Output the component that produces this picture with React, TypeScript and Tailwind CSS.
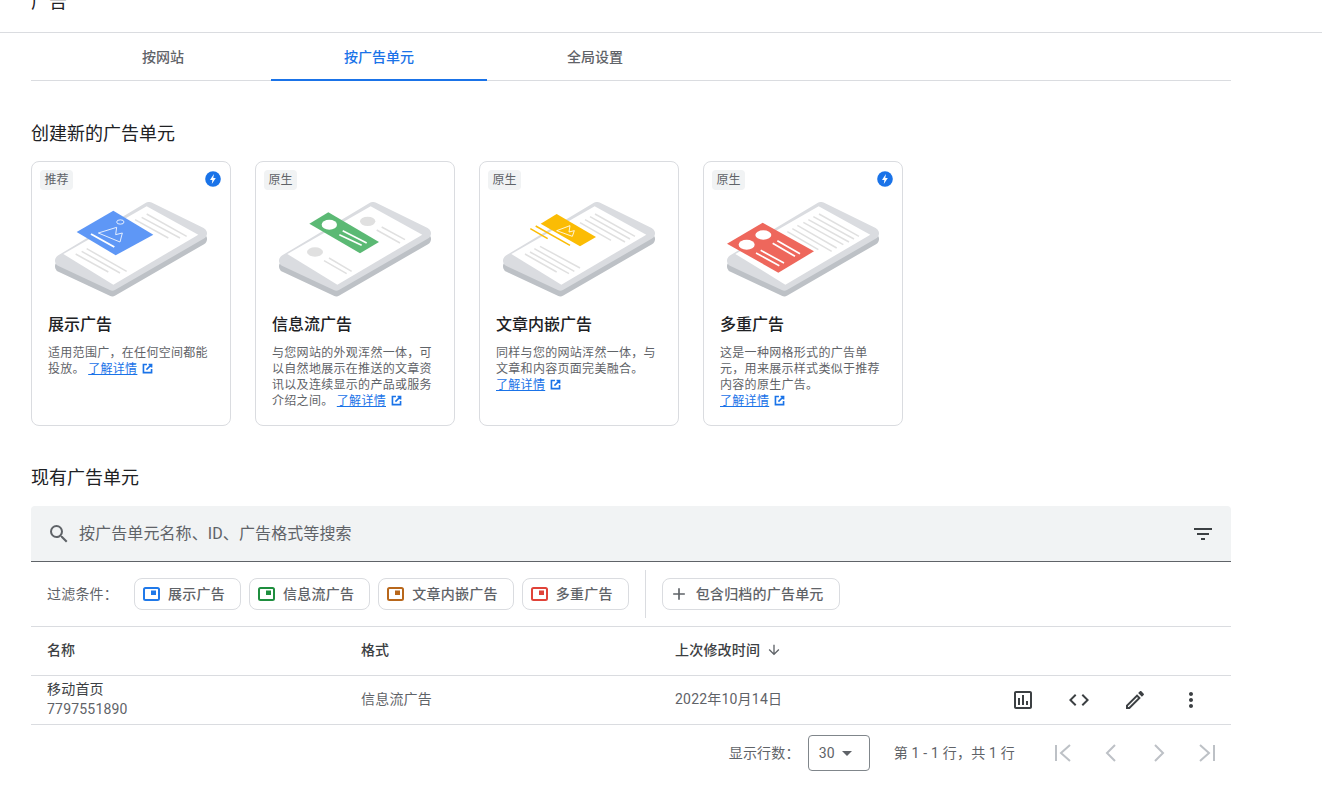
import type { ReactNode } from 'react';

const BLUE = '#1a73e8';

function Icon({ d, className }: { d: string; className?: string }) {
  return (
    <svg viewBox="0 0 24 24" className={className} fill="currentColor">
      <path d={d} />
    </svg>
  );
}

function Bolt() {
  return (
    <svg viewBox="0 0 16 16" className="h-4 w-4">
      <circle cx="8" cy="8" r="7.8" fill={BLUE} />
      <path d="M8.9 2.9 5 8.9h2.4l-.6 4.2 4-6.2H8.3z" fill="#fff" />
    </svg>
  );
}

function Lines({ items }: { items: number[][] }) {
  return (
    <g stroke="#e0e0e0" strokeWidth="4.5">
      {items.map((l) => (
        <line key={l.join('-')} x1={l[0]} y1={l[1]} x2={l[2]} y2={l[3]} />
      ))}
    </g>
  );
}

function Phone({ shift, children }: { shift: number; children: ReactNode }) {
  return (
    <svg viewBox="90 142 456 285" className="h-[95px] w-[152px]">
      <polygon points="108,335 372,177 528,253 262,407" fill="#bdc1c6" stroke="#bdc1c6" strokeWidth="36" strokeLinejoin="round" />
      <polygon points="108,318 372,160 528,236 262,390" fill="#dadce0" stroke="#dadce0" strokeWidth="36" strokeLinejoin="round" />
      <polygon points="115,298 365,155 520,240 265,390" fill="#fff" />
      <g transform={`translate(${shift} 0)`}>{children}</g>
    </svg>
  );
}

function DisplayArt() {
  return (
    <Phone shift={0}>
      <Lines
        items={[
          [365, 178, 485, 245],
          [350, 188, 465, 250],
          [330, 195, 430, 250],
          [185, 282, 305, 350],
          [170, 290, 285, 355],
          [152, 298, 250, 352],
        ]}
      />
      <polygon points="265,168 385,240 272,302 155,232" fill="#5e97f6" />
      <ellipse cx="286" cy="202" rx="11" ry="6.5" fill="none" stroke="#fff" strokeWidth="2.5" />
      <polygon points="220,235 275,218 272,240 292,235 285,262" fill="none" stroke="#fff" strokeWidth="2.5" />
      <line x1="198" y1="238" x2="268" y2="277" stroke="#fff" strokeWidth="6" />
    </Phone>
  );
}

function FeedArt() {
  return (
    <Phone shift={3}>
      <ellipse cx="353" cy="200" rx="23" ry="14" fill="#e0e0e0" />
      <ellipse cx="195" cy="292" rx="24" ry="14" fill="#e0e0e0" />
      <Lines
        items={[
          [395, 217, 465, 255],
          [380, 226, 450, 265],
          [237, 310, 305, 350],
          [222, 318, 290, 357],
        ]}
      />
      <polygon points="235,173 387,262 330,296 178,207" fill="#5bb974" />
      <ellipse cx="238" cy="210" rx="23" ry="15" fill="#fff" />
      <g stroke="#fff" strokeWidth="5">
        <line x1="278" y1="228" x2="350" y2="265" />
        <line x1="268" y1="240" x2="335" y2="272" />
      </g>
    </Phone>
  );
}

function ArticleArt() {
  return (
    <Phone shift={6}>
      <Lines
        items={[
          [360, 178, 480, 245],
          [345, 186, 465, 253],
          [330, 195, 450, 262],
          [315, 204, 408, 257],
          [195, 275, 315, 340],
          [178, 282, 298, 350],
          [165, 292, 282, 357],
          [150, 298, 245, 352],
        ]}
      />
      <polygon points="245,178 363,247 315,275 197,207" fill="#fbbc04" />
      <g stroke="#fbbc04" strokeWidth="4.5">
        <line x1="182" y1="214" x2="285" y2="272" />
        <line x1="166" y1="222" x2="218" y2="252" />
      </g>
      <polygon points="245,228 285,213 282,232 298,228 292,245" fill="none" stroke="#fff" strokeWidth="2.5" />
    </Phone>
  );
}

function MultiArt() {
  return (
    <Phone shift={9}>
      <Lines
        items={[
          [357, 178, 477, 245],
          [340, 186, 462, 253],
          [325, 195, 447, 262],
          [310, 203, 430, 270],
          [292, 212, 410, 280],
          [277, 222, 395, 290],
          [262, 231, 355, 285],
        ]}
      />
      <polygon points="188,204 342,290 235,354 81,267" fill="#ee675c" />
      <ellipse cx="190" cy="241" rx="24" ry="14" fill="#fff" />
      <ellipse cx="140" cy="270" rx="24" ry="15" fill="#fff" />
      <g stroke="#fff" strokeWidth="5">
        <line x1="232" y1="258" x2="300" y2="297" />
        <line x1="218" y1="266" x2="285" y2="305" />
        <line x1="182" y1="287" x2="252" y2="325" />
        <line x1="168" y1="295" x2="238" y2="333" />
      </g>
    </Phone>
  );
}

function LearnMore() {
  return (
    <span className="whitespace-nowrap text-[#1a73e8]">
      <a href="#" className="underline">了解详情</a>
      <svg viewBox="0 0 24 24" className="ml-1 inline-block h-[13px] w-[13px] align-[-2px]" fill="none" stroke="currentColor" strokeWidth="3">
        <path d="M11 4.5H4.5v15h15V13M14 4.5h5.5V10M19 5l-9 9" />
      </svg>
    </span>
  );
}

const cards = [
  { tag: '推荐', bolt: true, art: <DisplayArt />, title: '展示广告', desc: '适用范围广\uff0c在任何空间都能投放。' },
  { tag: '原生', bolt: false, art: <FeedArt />, title: '信息流广告', desc: '与您网站的外观浑然一体\uff0c可以自然地展示在推送的文章资讯以及连续显示的产品或服务介绍之间。' },
  { tag: '原生', bolt: false, art: <ArticleArt />, title: '文章内嵌广告', desc: '同样与您的网站浑然一体\uff0c与文章和内容页面完美融合。' },
  { tag: '原生', bolt: true, art: <MultiArt />, title: '多重广告', desc: '这是一种网格形式的广告单元\uff0c用来展示样式类似于推荐内容的原生广告。' },
];

function AdCard({ card }: { card: (typeof cards)[number] }) {
  return (
    <div className="flex h-[265px] w-[200px] flex-col rounded-lg border border-[#dadce0] bg-white">
      <div className="flex items-start justify-between pl-2 pr-[9px] pt-2">
        <span className="flex h-5 w-[33px] items-center justify-center rounded bg-[#f1f3f4] text-xs text-[#5f6368]">{card.tag}</span>
        {card.bolt && (
          <span className="mt-px">
            <Bolt />
          </span>
        )}
      </div>
      <div className="mt-3 flex justify-center">{card.art}</div>
      <div className="mt-4 px-4">
        <div className="text-base font-medium leading-6 text-[#202124]">{card.title}</div>
        <p className="mt-2 text-xs leading-4 tracking-[0.3px] text-[#5f6368]">
          {card.desc} <LearnMore />
        </p>
      </div>
    </div>
  );
}

function Chip({ color, label }: { color: string; label: string }) {
  return (
    <button type="button" className="flex h-8 items-center gap-2 rounded-lg border border-[#dadce0] bg-white pl-2 pr-[15px] text-sm font-medium tracking-[0.25px] text-[#5f6368]">
      <svg viewBox="0 0 17 14" className="h-3.5 w-[17px]" style={{ color }}>
        <rect x="1" y="1" width="15" height="12" rx="1.5" fill="none" stroke="currentColor" strokeWidth="2" />
        <rect x="8" y="3.5" width="5" height="4.5" fill="currentColor" />
      </svg>
      {label}
    </button>
  );
}

const paths = {
  search: 'M15.5 14h-.79l-.28-.27A6.47 6.47 0 0 0 16 9.5 6.5 6.5 0 1 0 9.5 16c1.61 0 3.09-.59 4.23-1.57l.27.28v.79l5 4.99L20.49 19l-4.99-5zm-6 0C7.01 14 5 11.99 5 9.5S7.01 5 9.5 5 14 7.01 14 9.5 11.99 14 9.5 14z',
  filter: 'M10 18h4v-2h-4v2zM3 6v2h18V6H3zm3 7h12v-2H6v2z',
  chart: 'M19 3H5c-1.1 0-2 .9-2 2v14c0 1.1.9 2 2 2h14c1.1 0 2-.9 2-2V5c0-1.1-.9-2-2-2zm0 16H5V5h14v14zM7 10h2v7H7zm4-3h2v10h-2zm4 6h2v4h-2z',
  code: 'M9.4 16.6 4.8 12l4.6-4.6L8 6l-6 6 6 6 1.4-1.4zm5.2 0 4.6-4.6-4.6-4.6L16 6l6 6-6 6-1.4-1.4z',
  edit: 'M14.06 9.02l.92.92L5.92 19H5v-.92l9.06-9.06M17.66 3c-.25 0-.51.1-.7.29l-1.83 1.83 3.75 3.75 1.83-1.83c.39-.39.39-1.02 0-1.41l-2.34-2.34c-.2-.2-.45-.29-.71-.29zm-3.6 3.19L3 17.25V21h3.75L17.81 9.94l-3.75-3.75z',
  more: 'M12 8c1.1 0 2-.9 2-2s-.9-2-2-2-2 .9-2 2 .9 2 2 2zm0 2c-1.1 0-2 .9-2 2s.9 2 2 2 2-.9 2-2-.9-2-2-2zm0 6c-1.1 0-2 .9-2 2s.9 2 2 2 2-.9 2-2-.9-2-2-2z',
  plus: 'M19 13h-6v6h-2v-6H5v-2h6V5h2v6h6v2z',
  down: 'M20 12l-1.41-1.41L13 16.17V4h-2v12.17l-5.58-5.59L4 12l8 8 8-8z',
};

function PageIcon({ children }: { children: ReactNode }) {
  return (
    <svg viewBox="0 0 24 24" className="h-6 w-6" fill="none" stroke="#bdc1c6" strokeWidth="2">
      {children}
    </svg>
  );
}

export default function App() {
  return (
    <div className="h-[808px] overflow-hidden bg-white font-[Roboto,'Noto_Sans_CJK_SC',sans-serif] text-[#202124]">
      <header className="h-[33px] overflow-hidden border-b border-[#dadce0] pl-[31px]">
        <div className="-mt-2.5 text-lg leading-6">广告</div>
      </header>

      <main className="ml-[31px] w-[1200px]">
        <nav className="flex h-12 items-center border-b border-[#dadce0] pl-6 text-sm font-medium text-[#5f6368]">
          <a className="flex h-full w-[216px] items-center justify-center">按网站</a>
          <a className="relative flex h-full w-[216px] items-center justify-center text-[#1a73e8]">
            按广告单元
            <span className="absolute -bottom-px left-0 h-0.5 w-full bg-[#1a73e8]" />
          </a>
          <a className="flex h-full w-[216px] items-center justify-center">全局设置</a>
        </nav>

        <h2 className="mt-[41px] text-lg font-normal leading-6">创建新的广告单元</h2>
        <div className="mt-[15px] flex gap-6">
          {cards.map((card) => (
            <AdCard key={card.title} card={card} />
          ))}
        </div>

        <h2 className="mt-10 text-lg font-normal leading-6">现有广告单元</h2>

        <div className="mt-4 flex h-14 items-center rounded-t border-b border-[#5f6368] bg-[#f1f3f4] pl-4 pr-4 text-[#5f6368]">
          <Icon d={paths.search} className="h-6 w-6" />
          <span className="ml-2 flex-1 text-base tracking-[0.1px]">按广告单元名称、ID、广告格式等搜索</span>
          <Icon d={paths.filter} className="h-6 w-6 text-[#3c4043]" />
        </div>

        <div className="flex h-[65px] items-center border-b border-[#dadce0] pl-4 text-[#5f6368]">
          <span className="w-[87px] text-sm tracking-[0.2px]">{'过滤条件\uff1a'}</span>
          <div className="flex gap-2">
            <Chip color="#2079e9" label="展示广告" />
            <Chip color="#1e8e3e" label="信息流广告" />
            <Chip color="#b8671b" label="文章内嵌广告" />
            <Chip color="#e04339" label="多重广告" />
          </div>
          <div className="ml-4 mr-4 h-12 w-px bg-[#dadce0]" />
          <button type="button" className="flex h-8 items-center gap-[7px] rounded-lg border border-[#dadce0] pl-[6px] pr-[15px] text-sm font-medium tracking-[0.2px]">
            <Icon d={paths.plus} className="h-5 w-5" />
            包含归档的广告单元
          </button>
        </div>

        <div className="flex h-[49px] items-center border-b border-[#dadce0] pb-[3px] text-sm font-medium text-[#3c4043]">
          <div className="w-[330px] pl-4">名称</div>
          <div className="w-[314px]">格式</div>
          <div className="flex items-center gap-1.5 tracking-[0.2px]">
            上次修改时间
            <Icon d={paths.down} className="h-4 w-4 text-[#5f6368]" />
          </div>
        </div>

        <div className="flex h-[49px] items-center border-b border-[#dadce0] text-sm tracking-[0.2px] text-[#5f6368]">
          <div className="-mt-0.5 w-[330px] pl-4 leading-5">
            <div className="text-[#3c4043]">移动首页</div>
            <div>7797551890</div>
          </div>
          <div className="-mt-0.5 w-[314px]">信息流广告</div>
          <div className="-mt-0.5 w-[336px]">2022年10月14日</div>
          <div className="flex gap-8 text-[#3c4043]">
            <Icon d={paths.chart} className="h-6 w-6" />
            <Icon d={paths.code} className="h-6 w-6" />
            <Icon d={paths.edit} className="h-6 w-6" />
            <Icon d={paths.more} className="h-6 w-6" />
          </div>
        </div>

        <div className="flex h-14 items-center justify-end pr-3 text-sm tracking-[0.2px] text-[#5f6368]">
          <span>{'显示行数\uff1a'}</span>
          <div className="ml-2 flex h-9 w-[62px] items-center justify-between rounded border border-[#80868b] pl-2.5 pr-[17px]">
            <span>30</span>
            <svg viewBox="0 0 10 5" className="h-[5px] w-2.5" fill="#5f6368">
              <path d="M0 0h10L5 5z" />
            </svg>
          </div>
          <span className="ml-6 mr-[36px]">{'第 1 - 1 行\uff0c共 1 行'}</span>
          <div className="flex gap-6">
            <PageIcon>
              <path d="M5 4v16M19 4l-9 8 9 8" />
            </PageIcon>
            <PageIcon>
              <path d="M16 4l-8 8 8 8" />
            </PageIcon>
            <PageIcon>
              <path d="M8 4l8 8-8 8" />
            </PageIcon>
            <PageIcon>
              <path d="M19 4v16M5 4l9 8-9 8" />
            </PageIcon>
          </div>
        </div>
      </main>
    </div>
  );
}
